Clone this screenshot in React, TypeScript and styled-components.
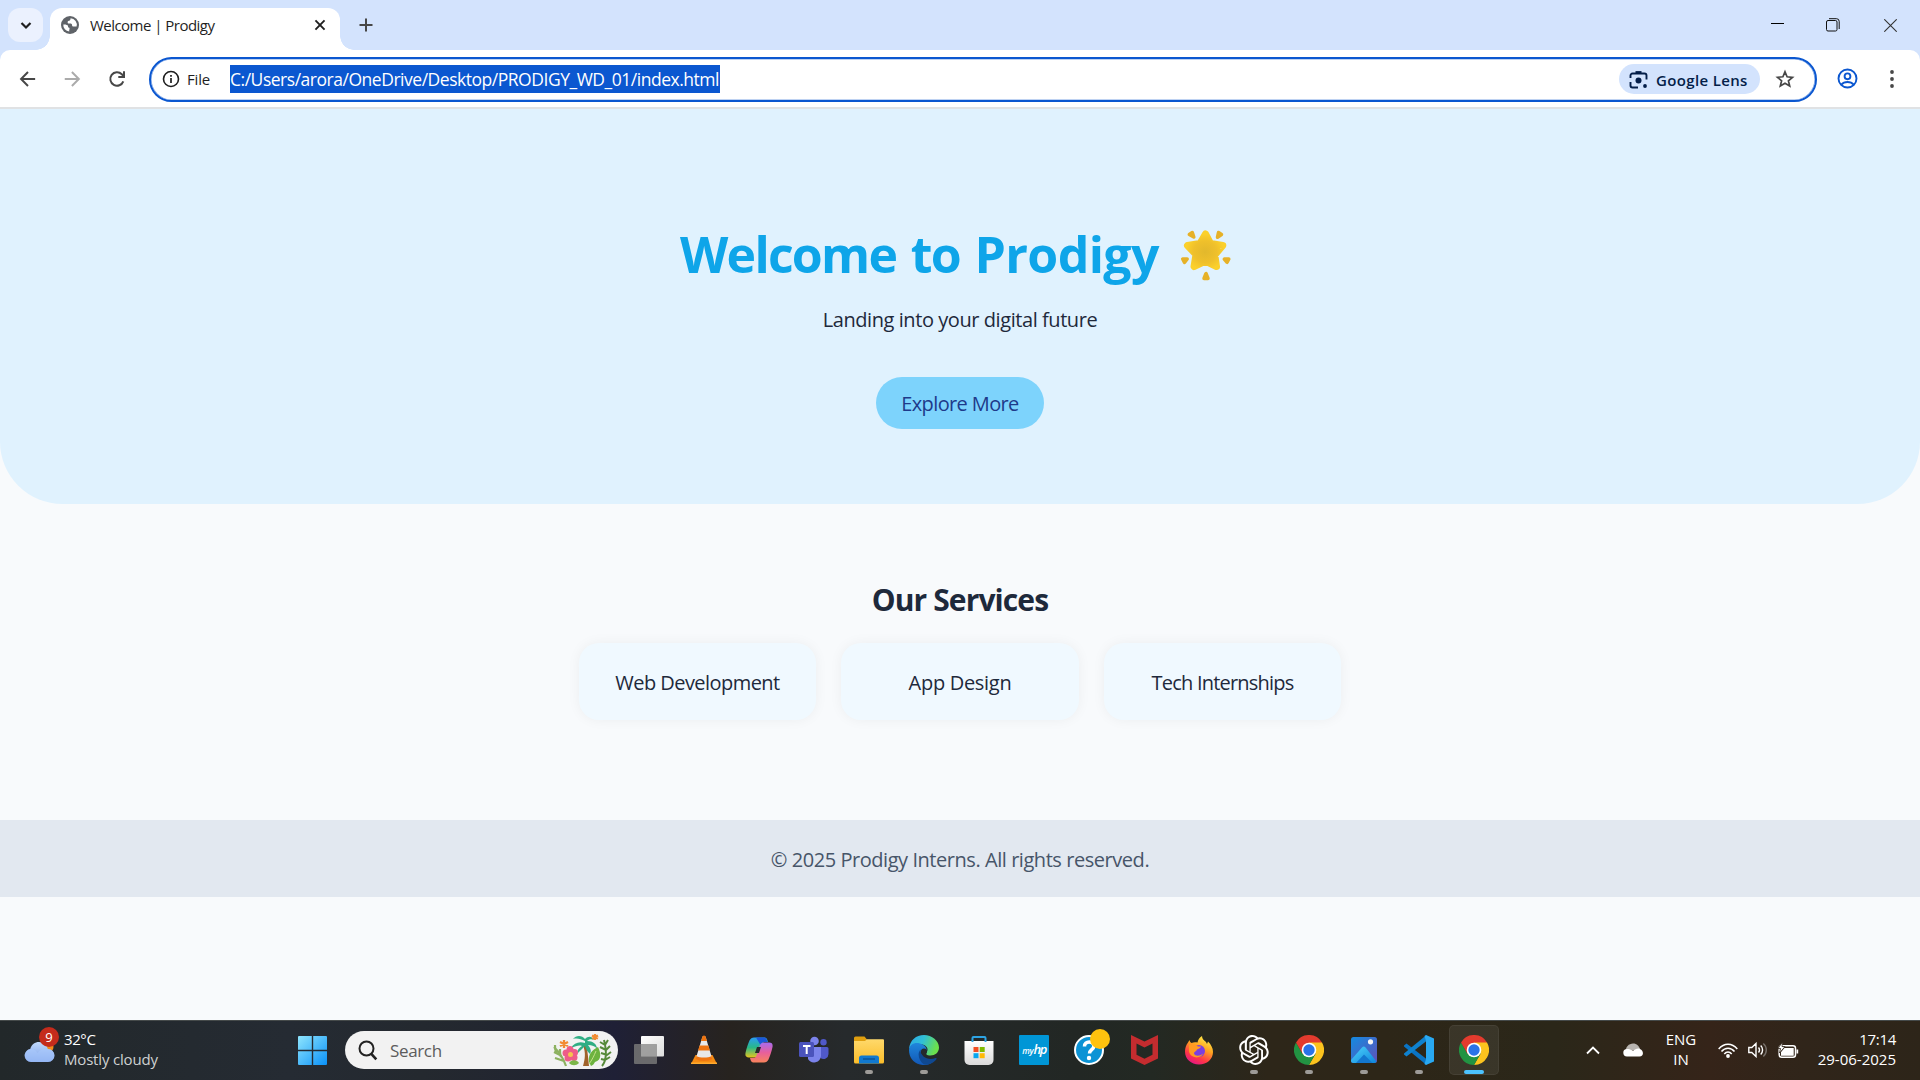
import React from 'react';
import styled, { createGlobalStyle } from 'styled-components';
import { RiOpenaiFill } from 'react-icons/ri';

const Global = createGlobalStyle`
  * { box-sizing: border-box; }
  html, body { margin: 0; padding: 0; background: #f8fafc; overflow: hidden; }
  svg { display: block; flex: none; }
`;

const Screen = styled.div`
  width: 1920px;
  height: 1080px;
  display: flex;
  flex-direction: column;
  font-family: "Open Sans", "Noto Sans", sans-serif;
  color: #1e293b;
  white-space: nowrap;
  overflow: hidden;
`;

const T = styled.span<{ $ls?: number; $ws?: number }>`
  letter-spacing: ${p => p.$ls ?? 0}px;
  word-spacing: ${p => p.$ws ?? 0}px;
`;

/* ---------- Browser frame ---------- */
const Browser = styled.header`
  background: #d3e3fd;
  flex: none;
`;
const TabStrip = styled.div`
  height: 50px;
  display: flex;
  align-items: flex-start;
  padding: 8px 0 0 8px;
`;
const TabSearch = styled.div`
  width: 35px;
  height: 34px;
  border-radius: 12px;
  background: #ebf1fe;
  display: grid;
  place-items: center;
`;
const Tab = styled.div`
  position: relative;
  margin-left: 7px;
  width: 290px;
  height: 42px;
  background: #fff;
  border-radius: 12px 12px 0 0;
  display: flex;
  align-items: center;
  padding: 0 13px 8px 11px;
  font-size: 15px;
  color: #1f1f1f;
  &::before, &::after {
    content: "";
    position: absolute;
    bottom: 0;
    width: 14px;
    height: 14px;
  }
  &::before { left: -14px; background: radial-gradient(circle at 0 0, transparent 13.5px, #fff 14px); }
  &::after { right: -14px; background: radial-gradient(circle at 100% 0, transparent 13.5px, #fff 14px); }
`;
const TabTitle = styled.div`
  flex: 1;
  margin-left: 11px;
  line-height: 20px;
`;
const NewTab = styled.div`
  width: 51px;
  height: 34px;
  display: grid;
  place-items: center;
`;
const WindowControls = styled.div`
  margin-left: auto;
  height: 34px;
  display: grid;
  grid-template-columns: 55px 56px 59px;
  place-items: center;
`;
const Toolbar = styled.div`
  height: 59px;
  background: #fff;
  border-radius: 10px 10px 0 0;
  border-bottom: 2px solid #e0e2e4;
  display: flex;
  align-items: center;
  padding-left: 17px;
`;
const NavButtons = styled.div`
  width: 132px;
  display: flex;
  align-items: center;
  gap: 23px;
`;
const Omnibox = styled.div`
  width: 1668px;
  height: 45px;
  margin-top: 1px;
  border: 2px solid #0b57d0;
  border-radius: 23px;
  box-shadow: inset 0 0 0 .6px #7ea6e6;
  display: flex;
  align-items: center;
  padding: 0 20px 0 11px;
`;
const FileLabel = styled.div`
  width: 43px;
  margin-left: 7px;
  font-size: 15px;
  line-height: 20px;
  color: #1f1f1f;
`;
const Url = styled.div`
  height: 28px;
  width: 490px;
  line-height: 29px;
  font-size: 17.5px;
  color: #fff;
  background: #0b57d0;
`;
const LensChip = styled.div`
  margin-left: auto;
  width: 141px;
  height: 30px;
  border-radius: 15px;
  background: #d3e3fd;
  color: #041e49;
  display: flex;
  align-items: center;
  gap: 8px;
  padding: 1px 0 0 10px;
  margin-right: 15px;
  font-size: 15px;
  font-weight: 600;
`;
const ToolbarEnd = styled.div`
  margin-left: 20px;
  display: flex;
  align-items: center;
  gap: 31px;
`;

/* ---------- Page ---------- */
const Page = styled.main`
  flex: 1;
  background: #f8fafc;
`;
const Hero = styled.section`
  height: 395px;
  background: #e0f2fe;
  border-radius: 0 0 62.5px 62.5px;
  display: flex;
  flex-direction: column;
  align-items: center;
  padding-top: 111px;
`;
const HeroTitle = styled.h1`
  margin: 0;
  width: 560px;
  height: 68px;
  line-height: 68px;
  font-size: 50px;
  font-weight: 700;
  color: #0ea5e9;
  display: flex;
  align-items: center;
  justify-content: space-between;
`;
const HeroText = styled.p`
  margin: 18px 0 0;
  font-size: 20px;
  line-height: 28px;
`;
const ExploreButton = styled.a`
  margin-top: 43px;
  width: 168px;
  height: 52px;
  border-radius: 26px;
  background: #7dd3fc;
  color: #1e3a8a;
  font-size: 20px;
  line-height: 54px;
  text-align: center;
`;
const Services = styled.section`
  height: 316px;
  padding-top: 76px;
  display: flex;
  flex-direction: column;
  align-items: center;
`;
const ServicesTitle = styled.h2`
  margin: 0 0 23px;
  font-size: 30px;
  line-height: 40px;
  font-weight: 700;
`;
const CardRow = styled.div`
  display: flex;
  gap: 25px;
`;
const Card = styled.article`
  width: 237.5px;
  height: 77px;
  line-height: 79px;
  border-radius: 20px;
  background: #f0f9ff;
  box-shadow: 0 0 13px rgba(0, 0, 0, .05);
  text-align: center;
  font-size: 20px;
`;
const Footer = styled.footer`
  height: 77px;
  line-height: 79px;
  background: #e2e8f0;
  color: #475569;
  text-align: center;
  font-size: 20px;
`;

/* ---------- Taskbar ---------- */
const Taskbar = styled.nav`
  height: 60px;
  flex: none;
  display: flex;
  align-items: center;
  padding-bottom: 1px;
  border-top: 1px solid #454a4a;
  background: linear-gradient(90deg, #22282a 0, #252b33 15%, #24292f 22%, #212431 29%, #1f2036 32%, #27231f 38%, #262a2c 44%, #222724 56%, #232923 60%, #2d2619 66%, #2d2618 72%, #2b2719 81%, #352419 89%, #30251a 94%, #2d2519 100%);
  color: #fff;
`;
const Weather = styled.div`
  width: 298px;
  padding: 0 0 3px 24px;
  display: flex;
  align-items: center;
  font-size: 15px;
  line-height: 20px;
`;
const WeatherIcon = styled.div`
  position: relative;
  width: 40px;
  height: 44px;
  display: flex;
  align-items: center;
  padding-top: 6px;
`;
const Badge = styled.span`
  position: absolute;
  left: 15px;
  top: 0;
  width: 20px;
  height: 20px;
  border-radius: 50%;
  background: #c42b1c;
  font-size: 13px;
  line-height: 20px;
  text-align: center;
`;
const WeatherText = styled.div`
  display: flex;
  flex-direction: column;
  color: #fff;
  span + span { color: #cfd1d2; }
`;
const SearchBox = styled.div`
  width: 273px;
  height: 38px;
  margin: 0 3.5px 0 18px;
  border-radius: 19px;
  background: #f2f2f2;
  color: #5c5c5c;
  display: flex;
  align-items: center;
  padding: 0 6px 0 13px;
  font-size: 17px;
  gap: 12px;
  svg:last-child { margin-left: auto; }
`;
const Slot = styled.div<{ $active?: boolean; $running?: boolean }>`
  position: relative;
  width: 50px;
  height: 50px;
  margin: 0 2.5px;
  border-radius: 5px;
  display: grid;
  place-items: center;
  background: ${p => (p.$active ? 'rgba(255,255,255,.07)' : 'transparent')};
  box-shadow: ${p => (p.$active ? 'inset 0 0 0 1px rgba(255,255,255,.06)' : 'none')};
  &::after {
    content: "";
    display: ${p => (p.$running || p.$active ? 'block' : 'none')};
    position: absolute;
    bottom: 1px;
    left: ${p => (p.$active ? 15 : 21)}px;
    width: ${p => (p.$active ? 20 : 8)}px;
    height: 4px;
    border-radius: 2px;
    background: ${p => (p.$active ? '#4cc2ff' : '#9d9b98')};
  }
`;
const Tray = styled.div`
  margin-left: auto;
  width: 352px;
  display: grid;
  grid-template-columns: 50px 30px 66px 28px 31px 30px 1fr;
  place-items: center;
  font-size: 15px;
  line-height: 20px;
`;
const Lines = styled.div<{ $end?: boolean }>`
  display: flex;
  flex-direction: column;
  align-items: ${p => (p.$end ? 'flex-end' : 'center')};
  justify-self: ${p => (p.$end ? 'end' : 'center')};
  padding: 0 ${p => (p.$end ? 24 : 0)}px 3px 0;
`;

/* ---------- Icons ---------- */
const GlobeIcon = () => (
  <svg width="18" height="18" viewBox="0 0 18 18">
    <circle cx="9" cy="9" r="9" fill="#5f6368" />
    <path d="M9.6 2.2c-.3 1.5-.2 2.2-1.6 2.6-1.3.3-1.5 1-1.3 2 .2.9 1.2.8 2.4.8 1.3 0 2.1.5 2 1.6-.1 1 .6 1.3 1.6 1.3h2.9a6.6 6.6 0 0 0-6-8.3zM2.3 8.4c1.5 0 3.3 0 4.3.9.9.9 0 2 1 2.3 1.2.3 1 1.2.8 2-.2.9-.3 1.3-.1 1.9a6.6 6.6 0 0 1-6-7.1z" fill="#fff" />
  </svg>
);
const Stroke = ({ d, size = 20, color = '#474747', w = 2 }: { d: string; size?: number; color?: string; w?: number }) => (
  <svg width={size} height={size} viewBox="0 0 20 20" fill="none" stroke={color} strokeWidth={w}><path d={d} /></svg>
);
const ReloadIcon = () => (
  <svg width="20" height="20" viewBox="0 0 20 20" fill="none" stroke="#474747" strokeWidth="2">
    <path d="M16.300 12.300A6.700 6.700 0 1 1 14.800 5.300L16.500 7" /><path d="M17 2.300V8h-5.700" />
  </svg>
);
const InfoIcon = () => (
  <svg width="18" height="18" viewBox="0 0 18 18"><circle cx="9" cy="9" r="7.500" fill="none" stroke="#1f1f1f" strokeWidth="1.600" /><path d="M9 8v5M9 5v1.800" stroke="#1f1f1f" strokeWidth="1.700" /></svg>
);
const LensIcon = () => (
  <svg width="19" height="19" viewBox="0 0 19 19" fill="none" stroke="#041e49" strokeWidth="1.900">
    <path d="M1.500 8V5.500a2 2 0 0 1 2-2h12a2 2 0 0 1 2 2V9.500M1.500 12v3.500a2 2 0 0 0 2 2H9" /><path d="M6.500 2.200h6" strokeWidth="2.200" />
    <circle cx="9.500" cy="10.500" r="3" fill="#041e49" stroke="none" /><circle cx="16" cy="16" r="1.900" fill="#041e49" stroke="none" />
  </svg>
);
const StarIcon = () => (
  <svg width="20" height="20" viewBox="0 0 20 20" fill="none" stroke="#474747" strokeWidth="1.700">
    <path d="M10 2.800l2.100 5 5.400.5-4.100 3.500 1.300 5.300L10 14.300l-4.700 2.800 1.300-5.300-4.100-3.500 5.400-.5z" />
  </svg>
);
const ProfileIcon = () => (
  <svg width="21" height="21" viewBox="0 0 21 21" fill="none" stroke="#0b57d0" strokeWidth="1.900">
    <circle cx="10.500" cy="10.500" r="9" /><circle cx="10.500" cy="8.300" r="2.900" /><path d="M4.300 16.700c3-3.700 9.400-3.700 12.400 0" />
  </svg>
);
const DotsIcon = () => (
  <svg width="6" height="20" viewBox="0 0 6 20" fill="#474747"><circle cx="3" cy="3" r="1.900" /><circle cx="3" cy="10" r="1.900" /><circle cx="3" cy="17" r="1.900" /></svg>
);
const GlowingStar = () => (
  <svg width="61" height="60" viewBox="0 0 61 60">
    <defs><radialGradient id="gs" cx=".5" cy=".55" r=".55"><stop offset="0" stopColor="#e2b82c" /><stop offset=".6" stopColor="#efc02b" /><stop offset="1" stopColor="#fbd02b" /></radialGradient></defs>
    <path d="M26.500 10l5 9.500 12.300 2-8 9.500 1.700 11.500-11-5.500-11.500 5.500 2-12-8.500-9 12.500-2z" fill="url(#gs)" stroke="url(#gs)" strokeWidth="7" strokeLinejoin="round" />
    <g fill="#e6b127" stroke="#e6b127" strokeWidth="3.500" strokeLinejoin="round">
      <path d="M10.300 10.500l3-2 1.500 4.500z" /><path d="M39.500 8.500l3 2-4 2.700z" /><path d="M3.700 35h4.500l-2.700 3.300z" /><path d="M45.300 35h4.500l-1.700 3.300z" /><path d="M27 49.500l-2 5h4z" />
    </g>
  </svg>
);
const CloudBlue = () => (
  <svg width="31" height="22" viewBox="0 0 31 22">
    <defs><linearGradient id="cb" x2="0" y2="1"><stop stopColor="#c1dafd" /><stop offset="1" stopColor="#779de8" /></linearGradient></defs>
    <circle cx="24" cy="6" r="5.500" fill="#f28a1c" />
    <path d="M7 21a6.500 6.500 0 0 1-.8-12.900C7.500 3.500 11 1 15 1c4.500 0 7.800 2.800 8.800 7A6.500 6.500 0 0 1 24 21z" fill="url(#cb)" />
    <path d="M7 21a6.500 6.500 0 0 1 0-13c3 0 5 1.500 6.500 4 2-3 6-5 10.500-4a6.500 6.500 0 0 1 0 13z" fill="#a9c8fb" opacity=".6" />
  </svg>
);
const WindowsIcon = () => (
  <svg width="29" height="29" viewBox="0 0 29 29">
    <defs><linearGradient id="wi" x2="1" y2="1"><stop stopColor="#8fe5fd" /><stop offset="1" stopColor="#0a91f8" /></linearGradient></defs>
    <path d="M1 0h12.800v13.800H0V1a1 1 0 0 1 1-1zM15.200 0H28a1 1 0 0 1 1 1v12.800H15.200zM0 15.200h13.800V29H1a1 1 0 0 1-1-1zM15.200 15.200H29V28a1 1 0 0 1-1 1H15.200z" fill="url(#wi)" />
  </svg>
);
const Plants = () => (
  <svg width="60" height="34" viewBox="0 0 60 34">
    <g fill="none" stroke="#8db160" strokeWidth="2.200"><path d="M14 33C11 24 7 19 2 14M3 12c0 4 0 6 2 7M8 16c0 4 0 6 1 8M2 19l6 3M3 25l9 3" /></g>
    <path d="M31 12c3 8 2 14 0 21h6c-1-8-1-14-3-21z" fill="#a0622b" />
    <path d="M33 10C27 8 22 10 19 15c5-2 8-3 11-2-3 2-5 4-5 8 4-4 6-6 8-8 1 4 3 6 5 8 2-4 0-6-2-9 4 0 7 1 9 4 0-5-4-8-10-8 2-2 5-2 7-1-2-4-6-4-9-1-3-4-9-4-12 0 4-1 8 0 12 2z" fill="#2fae84" />
    <g stroke="#f28b32" strokeWidth="2.300"><path d="M12 7v8M8 9l8 4M16 9l-8 4M43 1v6M40 2.500l6 3M46 2.500l-6 3" /></g>
    <g fill="#ee5c88"><circle cx="18" cy="16.500" r="3.500" /><circle cx="14" cy="20" r="3.500" /><circle cx="16" cy="25" r="3.500" /><circle cx="22" cy="24.500" r="3.500" /><circle cx="22.500" cy="19.500" r="3.500" /></g>
    <circle cx="18.500" cy="21.500" r="2.500" fill="#f6c34e" />
    <path d="M17 30c3-4 8-3 10 0-3 3-7 3-10 0z" fill="#7bb648" />
    <path d="M37 29c-1-8 3-12 9-15 3 6 4 13-3 15-1 2-2 3-4 4z" fill="#6db33f" /><path d="M44 18c-2 5-4 9-7 13" stroke="#c5e08a" fill="none" />
    <g fill="none" stroke="#56893a" strokeWidth="2"><path d="M50 33c6-7 4-18 2-26M48 9l5 3 3-5M48 14l6 3 4-4M49 20l6 2 4-3M49 26l4 1 5-3" /></g>
  </svg>
);
const TaskViewIcon = () => (
  <svg width="32" height="30" viewBox="0 0 32 30"><defs><linearGradient id="tv" x2="1" y2="1"><stop stopColor="#fff" /><stop offset="1" stopColor="#dcdcdc" /></linearGradient></defs>
    <rect x="8" y="1" width="23" height="20.500" rx="1" fill="url(#tv)" /><rect x="1" y="9" width="23" height="20" rx="1" fill="#777" opacity=".85" /><path d="M8 9h16v12.500H8z" fill="#aaa" opacity=".7" /></svg>
);
const VlcIcon = () => (
  <svg width="26" height="30" viewBox="0 0 26 30">
    <path d="M4.500 20h17L26 29H0z" fill="#f58b12" /><path d="M0 27.500h26V29H0z" fill="#ffab2e" />
    <path d="M11.500 1.500h3L21 23c-2 3-14 3-16 0z" fill="#e8e8e8" /><path d="M11.500 1.200Q13 0 14.500 1.200L16 6h-6zM8.600 10.500h8.800l1.500 5H7.100zM5.500 21c3 2 12 2 15 0l.8 3c-3 2.500-13.600 2.500-16.600 0z" fill="#ee7410" />
  </svg>
);
const CopilotIcon = () => (
  <svg width="30" height="28" viewBox="0 0 30 28">
    <defs><linearGradient id="ca" x2="0" y2="1"><stop stopColor="#2a9df4" /><stop offset=".5" stopColor="#29b887" /><stop offset="1" stopColor="#e8c51d" /></linearGradient>
      <linearGradient id="cc" x2="0" y2="1"><stop stopColor="#a66cf0" /><stop offset=".5" stopColor="#e75f9c" /><stop offset="1" stopColor="#f9835b" /></linearGradient></defs>
    <path d="M18 1.500h2c2.500 0 3 1 4 4.500h-3c-2.500 0-3.300 1.500-4.200 4.500l-2 6.500c-1 3-2 4.500-5 4.500H5c-3 0-4-1.500-3.500-4.500C2.500 12 4 8 5.500 4.500 6.500 2.500 8 1.500 10 1.500z" fill="url(#ca)" />
    <path d="M12 1.500h7.500c2.500 0 3 1 4 4.500h-3c-2 0-3 1-3.700 3.500z" fill="#1b58d8" />
    <path d="M12 26.500h-2c-2.500 0-3-1-4-4.500h3c2.500 0 3.300-1.500 4.200-4.500l2-6.500c1-3 2-4.500 5-4.500H25c3 0 4 1.500 3.500 4.500-1 5-2.500 9-4 12.500-1 2-2.500 3-4.500 3z" fill="url(#cc)" />
    <path d="M13 11h4l-2 6h-4z" fill="#26292b" />
  </svg>
);
const TeamsIcon = () => (
  <svg width="30" height="28" viewBox="0 0 30 28">
    <circle cx="24.500" cy="6.300" r="3.200" fill="#5059c9" /><path d="M19 11h9a1.500 1.500 0 0 1 1.500 1.500V18a5 5 0 0 1-8 4z" fill="#5059c9" />
    <circle cx="15.500" cy="5" r="4.300" fill="#7b83eb" /><path d="M9 11h13v9a7 7 0 0 1-13 3z" fill="#7b83eb" />
    <rect x="0" y="6" width="15" height="15" rx="1.500" fill="#4b53bc" /><path d="M4 10h7.500M7.700 10v8" stroke="#fff" strokeWidth="2" />
  </svg>
);
const ExplorerIcon = () => (
  <svg width="30" height="28" viewBox="0 0 30 28"><defs><linearGradient id="ex" x2="0" y2="1"><stop stopColor="#ffd96b" /><stop offset="1" stopColor="#fbbd2a" /></linearGradient></defs>
    <path d="M0 2a1.500 1.500 0 0 1 1.500-1.500h9L13 3.500V8H0z" fill="#e09f0f" /><path d="M0 5h11l2-1.800h16a1 1 0 0 1 1 1V26a1.500 1.500 0 0 1-1.500 1.500h-27A1.500 1.500 0 0 1 0 26z" fill="url(#ex)" />
    <path d="M5 27.500V22a2.500 2.500 0 0 1 2.500-2.500h15A2.500 2.500 0 0 1 25 22v5.500z" fill="#1179cf" /><path d="M9 23h12" stroke="#0b4a8a" strokeWidth="1.200" /></svg>
);
const EdgeIcon = () => (
  <svg width="30" height="30" viewBox="0 0 30 30">
    <defs><linearGradient id="ea" x2="1" y2=".3"><stop stopColor="#2aa8e8" /><stop offset=".5" stopColor="#31bfd5" /><stop offset="1" stopColor="#6be04d" /></linearGradient>
      <linearGradient id="eb" x2="0" y2="1"><stop stopColor="#1f86dc" /><stop offset="1" stopColor="#1257b5" /></linearGradient></defs>
    <path d="M0 14C1 5 7 0 15 0s15 6 15 12.500c0 5-4 8-8.500 8-4 0-5-1.500-4-3 2.500-3 .5-7-4-8C8 8.500 2 10 0 14z" fill="url(#ea)" />
    <path d="M0 15C.5 9 6 7 11 8.500c4 1 7 4 6.500 7-1.500-2-6-1-6 3 0 5 5 9 14.500 6C21 31 15 30.500 11 29.500 4 28 0 22 0 15z" fill="url(#eb)" />
    <path d="M11.500 14.500c-3.500 4-2 11 3.500 15 5 .8 10-1.700 12.500-5.500.5-1-.4-1.300-1-1-7 3-15-1-15-8.500z" fill="#0f4890" /><circle cx="15" cy="16.500" r="3" fill="#252a2c" />
  </svg>
);
const StoreIcon = () => (
  <svg width="30" height="30" viewBox="0 0 30 30"><defs><linearGradient id="st" x2="0" y2="1"><stop stopColor="#fff" /><stop offset="1" stopColor="#dadada" /></linearGradient></defs>
    <path d="M.5 6h29v19a5 5 0 0 1-5 5h-19a5 5 0 0 1-5-5z" fill="url(#st)" /><path d="M8.500 7V3a1 1 0 0 1 1-1h11a1 1 0 0 1 1 1v4" fill="none" stroke="#2da4e4" strokeWidth="2" />
    <path d="M9.500 12h5v5h-5z" fill="#f04e23" /><path d="M15.700 12h5v5h-5z" fill="#7fba00" /><path d="M9.500 18.200h5v5h-5z" fill="#05a6f0" /><path d="M15.700 18.200h5v5h-5z" fill="#ffba08" /></svg>
);
const HpTile = styled.div`
  width: 30px;
  height: 30px;
  background: #0096d6;
  border-radius: 1px;
  font: italic 600 8.5px/28px "Open Sans", sans-serif;
  letter-spacing: -.2px;
  text-align: center;
  b { font-size: 13px; font-weight: 600; letter-spacing: -1.5px; }
`;
const HelpIcon = () => (
  <svg width="30" height="30" viewBox="0 6 30 30" overflow="visible"><circle cx="15" cy="21" r="14" fill="#0b93d5" stroke="#fff" strokeWidth="2" />
    <path d="M10.500 17.500c-.3-6 9.500-6 9.300-.3 0 3.500-4.300 3.500-4.300 7.300" fill="none" stroke="#fff" strokeWidth="3.500" /><circle cx="15" cy="29" r="2.200" fill="#fff" /><circle cx="26" cy="10" r="10" fill="#ffc20e" /></svg>
);
const McAfeeIcon = () => (
  <svg width="27" height="30" viewBox="0 0 27 30"><path d="M0 0l13.500 6.500L27 0v23.500L13.500 30 0 23.500zM5.500 8.500v11.300l8 4 8-4V8.500l-8 4z" fill="#c42c2f" /></svg>
);
const FirefoxIcon = () => (
  <svg width="28" height="29" viewBox="0 0 28 29"><defs><linearGradient id="ff" x1=".8" y1="0" x2=".3" y2="1"><stop stopColor="#fff44f" /><stop offset=".4" stopColor="#ffa520" /><stop offset=".75" stopColor="#ff3647" /><stop offset="1" stopColor="#e31587" /></linearGradient></defs>
    <path d="M3 6.500L4.500 4c.3 1.500 1 2.500 2 3 2-1 4-1 6-.5.5-3 2-5 4.500-6.500 0 3 2 4 4 6l1 2 1-2.500c3 3 5 6.500 5 10.500 0 7-6 12.500-14 12.500S0 23 0 15.500c0-3.500 1-6.500 3-9z" fill="url(#ff)" />
    <circle cx="14" cy="15" r="6" fill="#7a3fe0" /><path d="M4 9c3-2 6-1 9 1.500h3c-.5 2-3 2-4 3-.5 2-3 2-3 4 1 3 6 3 9 0-1 5-12 6-14-2z" fill="#ff9a22" /></svg>
);
const ChromeIcon = () => (
  <svg width="30" height="30" viewBox="0 0 30 30">
    <path d="M15 15L2 7.500A15 15 0 0 1 28 7.500z" fill="#e33b2e" /><path d="M15 7.500h13A15 15 0 0 1 15 30l6.500-11.200z" fill="#fcc31e" /><path d="M2 7.500A15 15 0 0 0 15 30l6.500-11.200L8.500 18.700z" fill="#229342" /><path d="M2 7.500l6.500 11.200L15 15V7.500h13z" fill="#e33b2e" />
    <circle cx="15" cy="15" r="7.300" fill="#fff" /><circle cx="15" cy="15" r="5.700" fill="#2a73e8" />
  </svg>
);
const PhotosIcon = () => (
  <svg width="26" height="26" viewBox="0 0 26 26"><defs><linearGradient id="ph" x2="1" y2="1"><stop stopColor="#148be0" /><stop offset="1" stopColor="#6150b8" /></linearGradient><linearGradient id="pm" x2="1" y2="1"><stop stopColor="#4ed3fb" /><stop offset="1" stopColor="#0d84dc" /></linearGradient></defs>
    <rect width="26" height="26" rx="2.500" fill="url(#ph)" /><path d="M0 23L11 10.500a2.500 2.500 0 0 1 3.600 0L25.500 24.500a2.500 2.500 0 0 1-2 1.500h-21A2.500 2.500 0 0 1 0 23.500z" fill="url(#pm)" /><path d="M5 26l8-8.500 8.500 8.500z" fill="#1377cf" /><circle cx="19.500" cy="4.800" r="2.600" fill="#f5f5f5" /></svg>
);
const VsCodeIcon = () => (
  <svg width="30" height="30" viewBox="0 0 30 30"><path d="M0 10.500l2.500-2L22.500 24v6L0 11.500z" fill="#0a74c4" /><path d="M0 19.500l2.500 2L22.500 6V0L0 18.500z" fill="#0f82cf" /><path d="M22 0l8 3.500v23L22 30l-1.500-1 1.500-5V6l-1.500-5z" fill="#29a9f2" /></svg>
);
const CloudWhite = () => (
  <svg width="20" height="14" viewBox="0 0 20 14"><path d="M3 9C2 4 6 .5 10 .5S16 3 17 6z" fill="#b8b4b0" /><path d="M4 13.500a3.700 3.700 0 0 1 0-7.400C7 5.500 8 7 10 8c2-2 5-3 7-2 4 1.500 4 7.500-.5 7.500z" fill="#fff" /></svg>
);
const WifiIcon = () => (
  <svg width="20" height="15" viewBox="0 0 20 15" fill="none" stroke="#fff" strokeWidth="1.500"><path d="M.7 6C6-.4 14-.4 19.300 6M3.500 8.500c3.500-4.300 9.500-4.300 13 0M6.300 11c2-2.600 5.400-2.600 7.400 0" /><circle cx="10" cy="13" r="1.900" fill="#fff" stroke="none" /></svg>
);
const VolumeIcon = () => (
  <svg width="20" height="16" viewBox="0 0 20 16" fill="none" stroke="#fff" strokeWidth="1.400"><path d="M.8 5.500h3L8 1.500v13l-4.200-4h-3zM10.500 5.500c1.200 1.500 1.200 3.500 0 5M12.700 3.500c2.500 2.500 2.500 6.500 0 9" /><path d="M15.300 1.500c4 3.500 4 9.500 0 13" stroke="#77706a" /></svg>
);
const BatteryIcon = () => (
  <svg width="21" height="17" viewBox="0 0 21 17"><rect x="1.200" y="3.700" width="16.300" height="11.600" rx="2.500" fill="none" stroke="#fff" strokeWidth="1.500" /><path d="M3 13.700V10l3.500-4h9.200v7.700zM18.500 7.500h1.700v4h-1.700z" fill="#fff" /><path d="M4.500 0L0 6.500h2.500L1.500 11 7 4.500H4z" fill="#fff" stroke="#30251a" strokeWidth=".8" /></svg>
);

const APPS: { icon: React.ReactNode; running?: boolean; active?: boolean }[] = [
  { icon: <TaskViewIcon /> },
  { icon: <VlcIcon /> },
  { icon: <CopilotIcon /> },
  { icon: <TeamsIcon /> },
  { icon: <ExplorerIcon />, running: true },
  { icon: <EdgeIcon />, running: true },
  { icon: <StoreIcon /> },
  { icon: <HpTile>my<b>hp</b></HpTile> },
  { icon: <HelpIcon /> },
  { icon: <McAfeeIcon /> },
  { icon: <FirefoxIcon /> },
  { icon: <RiOpenaiFill size={36} color="#fff" />, running: true },
  { icon: <ChromeIcon />, running: true },
  { icon: <PhotosIcon />, running: true },
  { icon: <VsCodeIcon />, running: true },
  { icon: <ChromeIcon />, active: true },
];

export default function App() {
  return (
    <Screen>
      <Global />
      <Browser>
        <TabStrip>
          <TabSearch><Stroke d="M5.500 8l4.500 4.500L14.500 8" color="#1f1f1f" w={2.200} /></TabSearch>
          <Tab>
            <GlobeIcon />
            <TabTitle><T $ls={-0.53}>Welcome | Prodigy</T></TabTitle>
            <Stroke d="M3.500 3.500l13 13M16.500 3.500l-13 13" size={14} color="#1f1f1f" w={2.700} />
          </Tab>
          <NewTab><Stroke d="M10 3.500v13M3.500 10h13" color="#474747" /></NewTab>
          <WindowControls>
            <svg width="13" height="13" viewBox="0 0 13 13"><path d="M0 4.500h13" stroke="#000" /></svg>
            <svg width="14" height="14" viewBox="0 0 14 14" fill="none" stroke="#111"><rect x=".5" y="2.500" width="10.500" height="10.500" rx="1.500" /><path d="M3 .7h7.500a2.700 2.700 0 0 1 2.700 2.700V11" /></svg>
            <svg width="13" height="13" viewBox="0 0 13 13"><path d="M.3.3l12.400 12.400M12.700.3L.3 12.700" stroke="#333" strokeWidth="1.100" /></svg>
          </WindowControls>
        </TabStrip>
        <Toolbar>
          <NavButtons>
            <Stroke d="M16.500 10H4M10 3.700L3.700 10l6.300 6.300" size={22} w={1.800} />
            <Stroke d="M2.500 10H15M9 3.700L15.300 10 9 16.300" size={22} color="#ababab" w={1.800} />
            <ReloadIcon />
          </NavButtons>
          <Omnibox>
            <InfoIcon />
            <FileLabel><T $ls={-0.2}>File</T></FileLabel>
            <Url><T $ls={-0.475}>C:/Users/arora/OneDrive/Desktop/PRODIGY_WD_01/index.html</T></Url>
            <LensChip><LensIcon /><T $ls={0.35}>Google Lens</T></LensChip>
            <StarIcon />
          </Omnibox>
          <ToolbarEnd><ProfileIcon /><DotsIcon /></ToolbarEnd>
        </Toolbar>
      </Browser>
      <Page>
        <Hero>
          <HeroTitle>
            <span><T $ls={-1.75} $ws={3.2}>Welcome </T><T $ls={-1.7} $ws={3.2}>to </T><T $ls={-0.6}>Prodigy</T></span>
            <GlowingStar />
          </HeroTitle>
          <HeroText><T $ls={-0.43}>Landing into your digital future</T></HeroText>
          <ExploreButton><T $ls={-0.62}>Explore More</T></ExploreButton>
        </Hero>
        <Services>
          <ServicesTitle><T $ls={-0.9}>Our Services</T></ServicesTitle>
          <CardRow>
            <Card><T $ls={-0.55}>Web Development</T></Card>
            <Card><T $ls={-0.3}>App Design</T></Card>
            <Card><T $ls={-0.8}>Tech Internships</T></Card>
          </CardRow>
        </Services>
        <Footer><T $ls={-0.45}>© 2025 Prodigy Interns. All rights reserved.</T></Footer>
      </Page>
      <Taskbar>
        <Weather>
          <WeatherIcon><CloudBlue /><Badge>9</Badge></WeatherIcon>
          <WeatherText><T $ls={-0.4}>32°C</T><T $ls={-0.18}>Mostly cloudy</T></WeatherText>
        </Weather>
        <WindowsIcon />
        <SearchBox>
          <svg width="20" height="21" viewBox="0 0 20 21" fill="none" stroke="#222" strokeWidth="2"><circle cx="8.500" cy="8.500" r="7" /><path d="M13.300 13.800l5 5.500" strokeWidth="2.600" /></svg>
          <T $ls={-0.35}>Search</T>
          <Plants />
        </SearchBox>
        {APPS.map((a, i) => <Slot key={i} $running={a.running} $active={a.active}>{a.icon}</Slot>)}
        <Tray>
          <svg width="14" height="9" viewBox="0 0 14 9"><path d="M1 7.500l6-6 6 6" fill="none" stroke="#fff" strokeWidth="1.800" /></svg>
          <CloudWhite />
          <Lines><T>ENG</T><T>IN</T></Lines>
          <WifiIcon />
          <VolumeIcon />
          <BatteryIcon />
          <Lines $end><T $ls={-0.3}>17:14</T><T>29-06-2025</T></Lines>
        </Tray>
      </Taskbar>
    </Screen>
  );
}
